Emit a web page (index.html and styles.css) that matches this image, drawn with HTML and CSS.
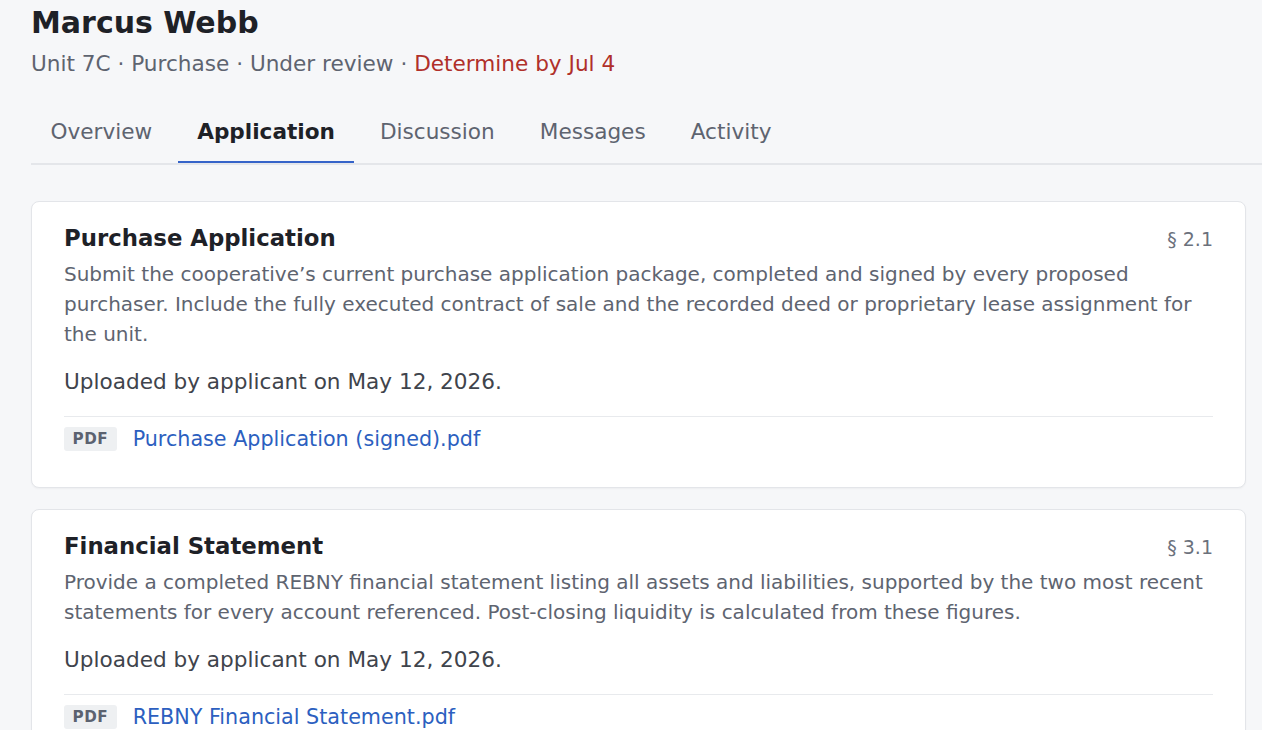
FILE: index.html
```html
<!DOCTYPE html>
<html lang="en">
<head>
<meta charset="utf-8">
<title>Marcus Webb — Application</title>
<link rel="stylesheet" href="styles.css">
</head>
<body>
<div class="page">
  <header class="head">
    <h1 class="name">Marcus Webb</h1>
    <p class="meta">Unit 7C · Purchase · Under review · <span class="due">Determine by Jul 4</span></p>
  </header>
  <nav class="tabs">
    <a class="tab">Overview</a>
    <a class="tab active">Application</a>
    <a class="tab">Discussion</a>
    <a class="tab">Messages</a>
    <a class="tab">Activity</a>
  </nav>
  <main class="cards">
    <section class="card">
      <div class="card-head">
        <h2 class="card-title">Purchase Application</h2>
        <span class="sec">§ 2.1</span>
      </div>
      <p class="desc">Submit the cooperative’s current purchase application package, completed and signed by every proposed purchaser. Include the fully executed contract of sale and the recorded deed or proprietary lease assignment for the unit.</p>
      <p class="upload">Uploaded by applicant on May 12, 2026.</p>
      <div class="file">
        <span class="badge">PDF</span>
        <a class="file-link">Purchase Application (signed).pdf</a>
      </div>
    </section>
    <section class="card">
      <div class="card-head">
        <h2 class="card-title">Financial Statement</h2>
        <span class="sec">§ 3.1</span>
      </div>
      <p class="desc">Provide a completed REBNY financial statement listing all assets and liabilities, supported by the two most recent statements for every account referenced. Post-closing liquidity is calculated from these figures.</p>
      <p class="upload">Uploaded by applicant on May 12, 2026.</p>
      <div class="file">
        <span class="badge">PDF</span>
        <a class="file-link">REBNY Financial Statement.pdf</a>
      </div>
    </section>
  </main>
</div>
</body>
</html>
```

FILE: styles.css
```css
html, body {
  margin: 0;
  padding: 0;
  background: #f6f7f9;
  font-family: "DejaVu Sans", "Liberation Sans", sans-serif;
  color: #1f2329;
  overflow: hidden;
}

.page {
  padding: 5px 0 0 31px;
}

.name {
  margin: 0;
  font-size: 30px;
  line-height: 36px;
  font-weight: 700;
  color: #1e2127;
}

.meta {
  margin: 8px 0 0;
  font-size: 21.6px;
  line-height: 30px;
  color: #5e6470;
}

.due {
  color: #b0302a;
}

.tabs {
  display: flex;
  gap: 6px;
  margin-top: 37px;
  border-bottom: 2px solid #e4e6ea;
}

.tab {
  padding: 1px 19.5px 14px;
  font-size: 21.6px;
  line-height: 30px;
  color: #5e6470;
  border-bottom: 2px solid transparent;
  cursor: pointer;
}

.tab.active {
  color: #1e2127;
  font-weight: 700;
  border-bottom-color: #3563c9;
}

.cards {
  display: flex;
  flex-direction: column;
  gap: 21px;
  margin: 36px 16px 0 0;
}

.card {
  background: #ffffff;
  border: 1.5px solid #e3e5e9;
  border-radius: 8px;
  padding: 21px 32px 36px;
  box-shadow: 0 1px 2px rgba(20, 25, 35, 0.04);
}

.card-head {
  display: flex;
  justify-content: space-between;
  align-items: baseline;
}

.card-title {
  margin: 0;
  font-size: 22.8px;
  line-height: 30px;
  font-weight: 700;
  color: #1e2127;
}

.sec {
  font-size: 19px;
  color: #6b717c;
}

.desc {
  margin: 6px 0 0;
  font-size: 20px;
  line-height: 30px;
  color: #5e6470;
}

.upload {
  margin: 18px 0 0;
  font-size: 21.6px;
  line-height: 30px;
  color: #3f444c;
}

.file {
  display: flex;
  align-items: center;
  gap: 16px;
  margin-top: 19px;
  padding-top: 10px;
  border-top: 1px solid #e8eaed;
}

.badge {
  display: inline-block;
  padding: 0 8.5px;
  height: 24px;
  line-height: 24px;
  font-size: 15.2px;
  font-weight: 700;
  letter-spacing: 0.5px;
  color: #5b6270;
  background: #eef0f2;
  border-radius: 3px;
}

.file-link {
  font-size: 20.7px;
  line-height: 24px;
  color: #2c5fc0;
  cursor: pointer;
}
```
